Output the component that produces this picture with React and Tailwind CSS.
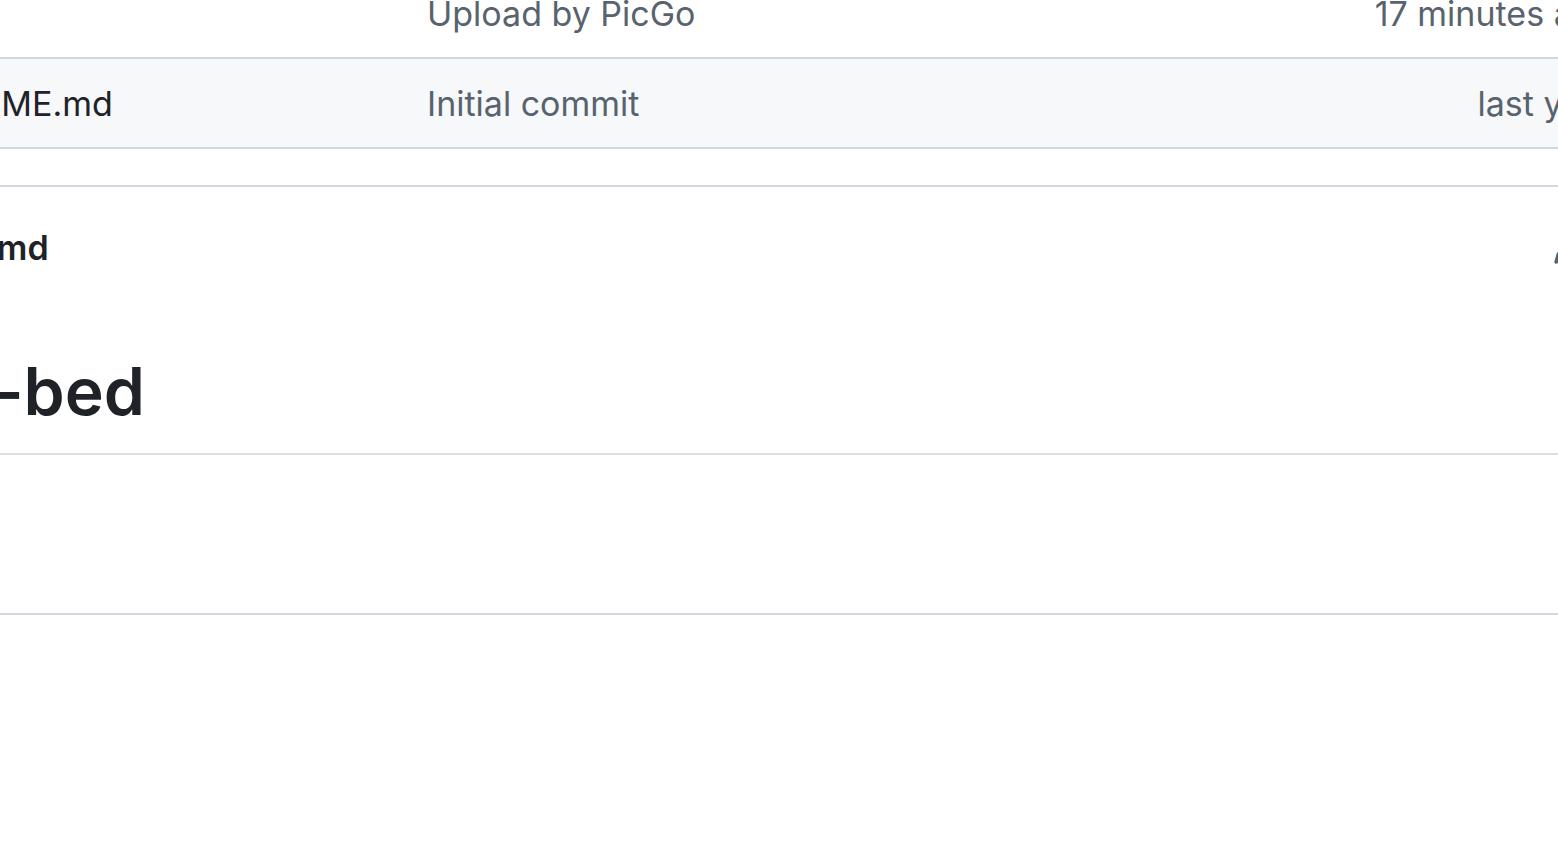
import React from "react";

const files = [
  { name: "img", message: "Upload by PicGo", time: "17 minutes ago" },
  { name: "README.md", message: "Initial commit", time: "last year" },
];

const PencilIcon = () => (
  <svg viewBox="0 0 16 16" className="w-[37px] h-[37px] fill-[#59636e] shrink-0">
    <path d="M11.013 1.427a1.75 1.75 0 0 1 2.474 0l1.086 1.086a1.75 1.75 0 0 1 0 2.474l-8.61 8.61c-.21.21-.47.364-.756.445l-3.251.93a.75.75 0 0 1-.927-.928l.929-3.25c.081-.286.235-.547.445-.758l8.61-8.61Zm.176 4.823L9.75 4.81l-6.286 6.287a.253.253 0 0 0-.064.108l-.558 1.953 1.953-.558a.253.253 0 0 0 .108-.064Zm1.238-3.763a.25.25 0 0 0-.354 0L10.811 3.75l1.439 1.44 1.263-1.263a.25.25 0 0 0 0-.354Z" />
  </svg>
);

const App = () => {
  return (
    <div className="w-[1558px] h-[854px] overflow-hidden bg-white font-['Inter','Liberation_Sans',sans-serif] text-[34px] text-[#1f2328]">
      <div className="-ml-[300px] -mt-[31px] w-[2100px]">
        {/* file list */}
        <div className="border-b-2 border-[#d0d7de]">
          {files.map((file, index) => (
            <div
              key={file.name}
              className={`flex items-center h-[88px] ${
                index > 0 ? "border-t-2 border-[#d0d7de] bg-[#f6f8fa] h-[90px]" : ""
              }`}
            >
              <div className="w-[727px] pl-[211px] whitespace-nowrap">{file.name}</div>
              <div className="flex-1 text-[#59636e]">{file.message}</div>
              <div className="w-[500px] pr-[186px] text-right text-[#59636e] whitespace-nowrap">
                {file.time}
              </div>
            </div>
          ))}
        </div>

        {/* readme */}
        <div className="mt-[36px] border-t-2 border-b-2 border-[#d0d7de]">
          <div className="flex items-center justify-between h-[120px] pl-[142px] pr-[211px]">
            <div className="font-semibold">README.md</div>
            <PencilIcon />
          </div>
          <div className="pl-[98px] pr-[100px] pt-[39px] h-[306px]">
            <h1 className="text-[66px] leading-[90px] font-semibold pb-[17px] border-b-2 border-[#d8dee4] whitespace-nowrap">
              image-bed
            </h1>
          </div>
        </div>
      </div>
    </div>
  );
};

export default App;
